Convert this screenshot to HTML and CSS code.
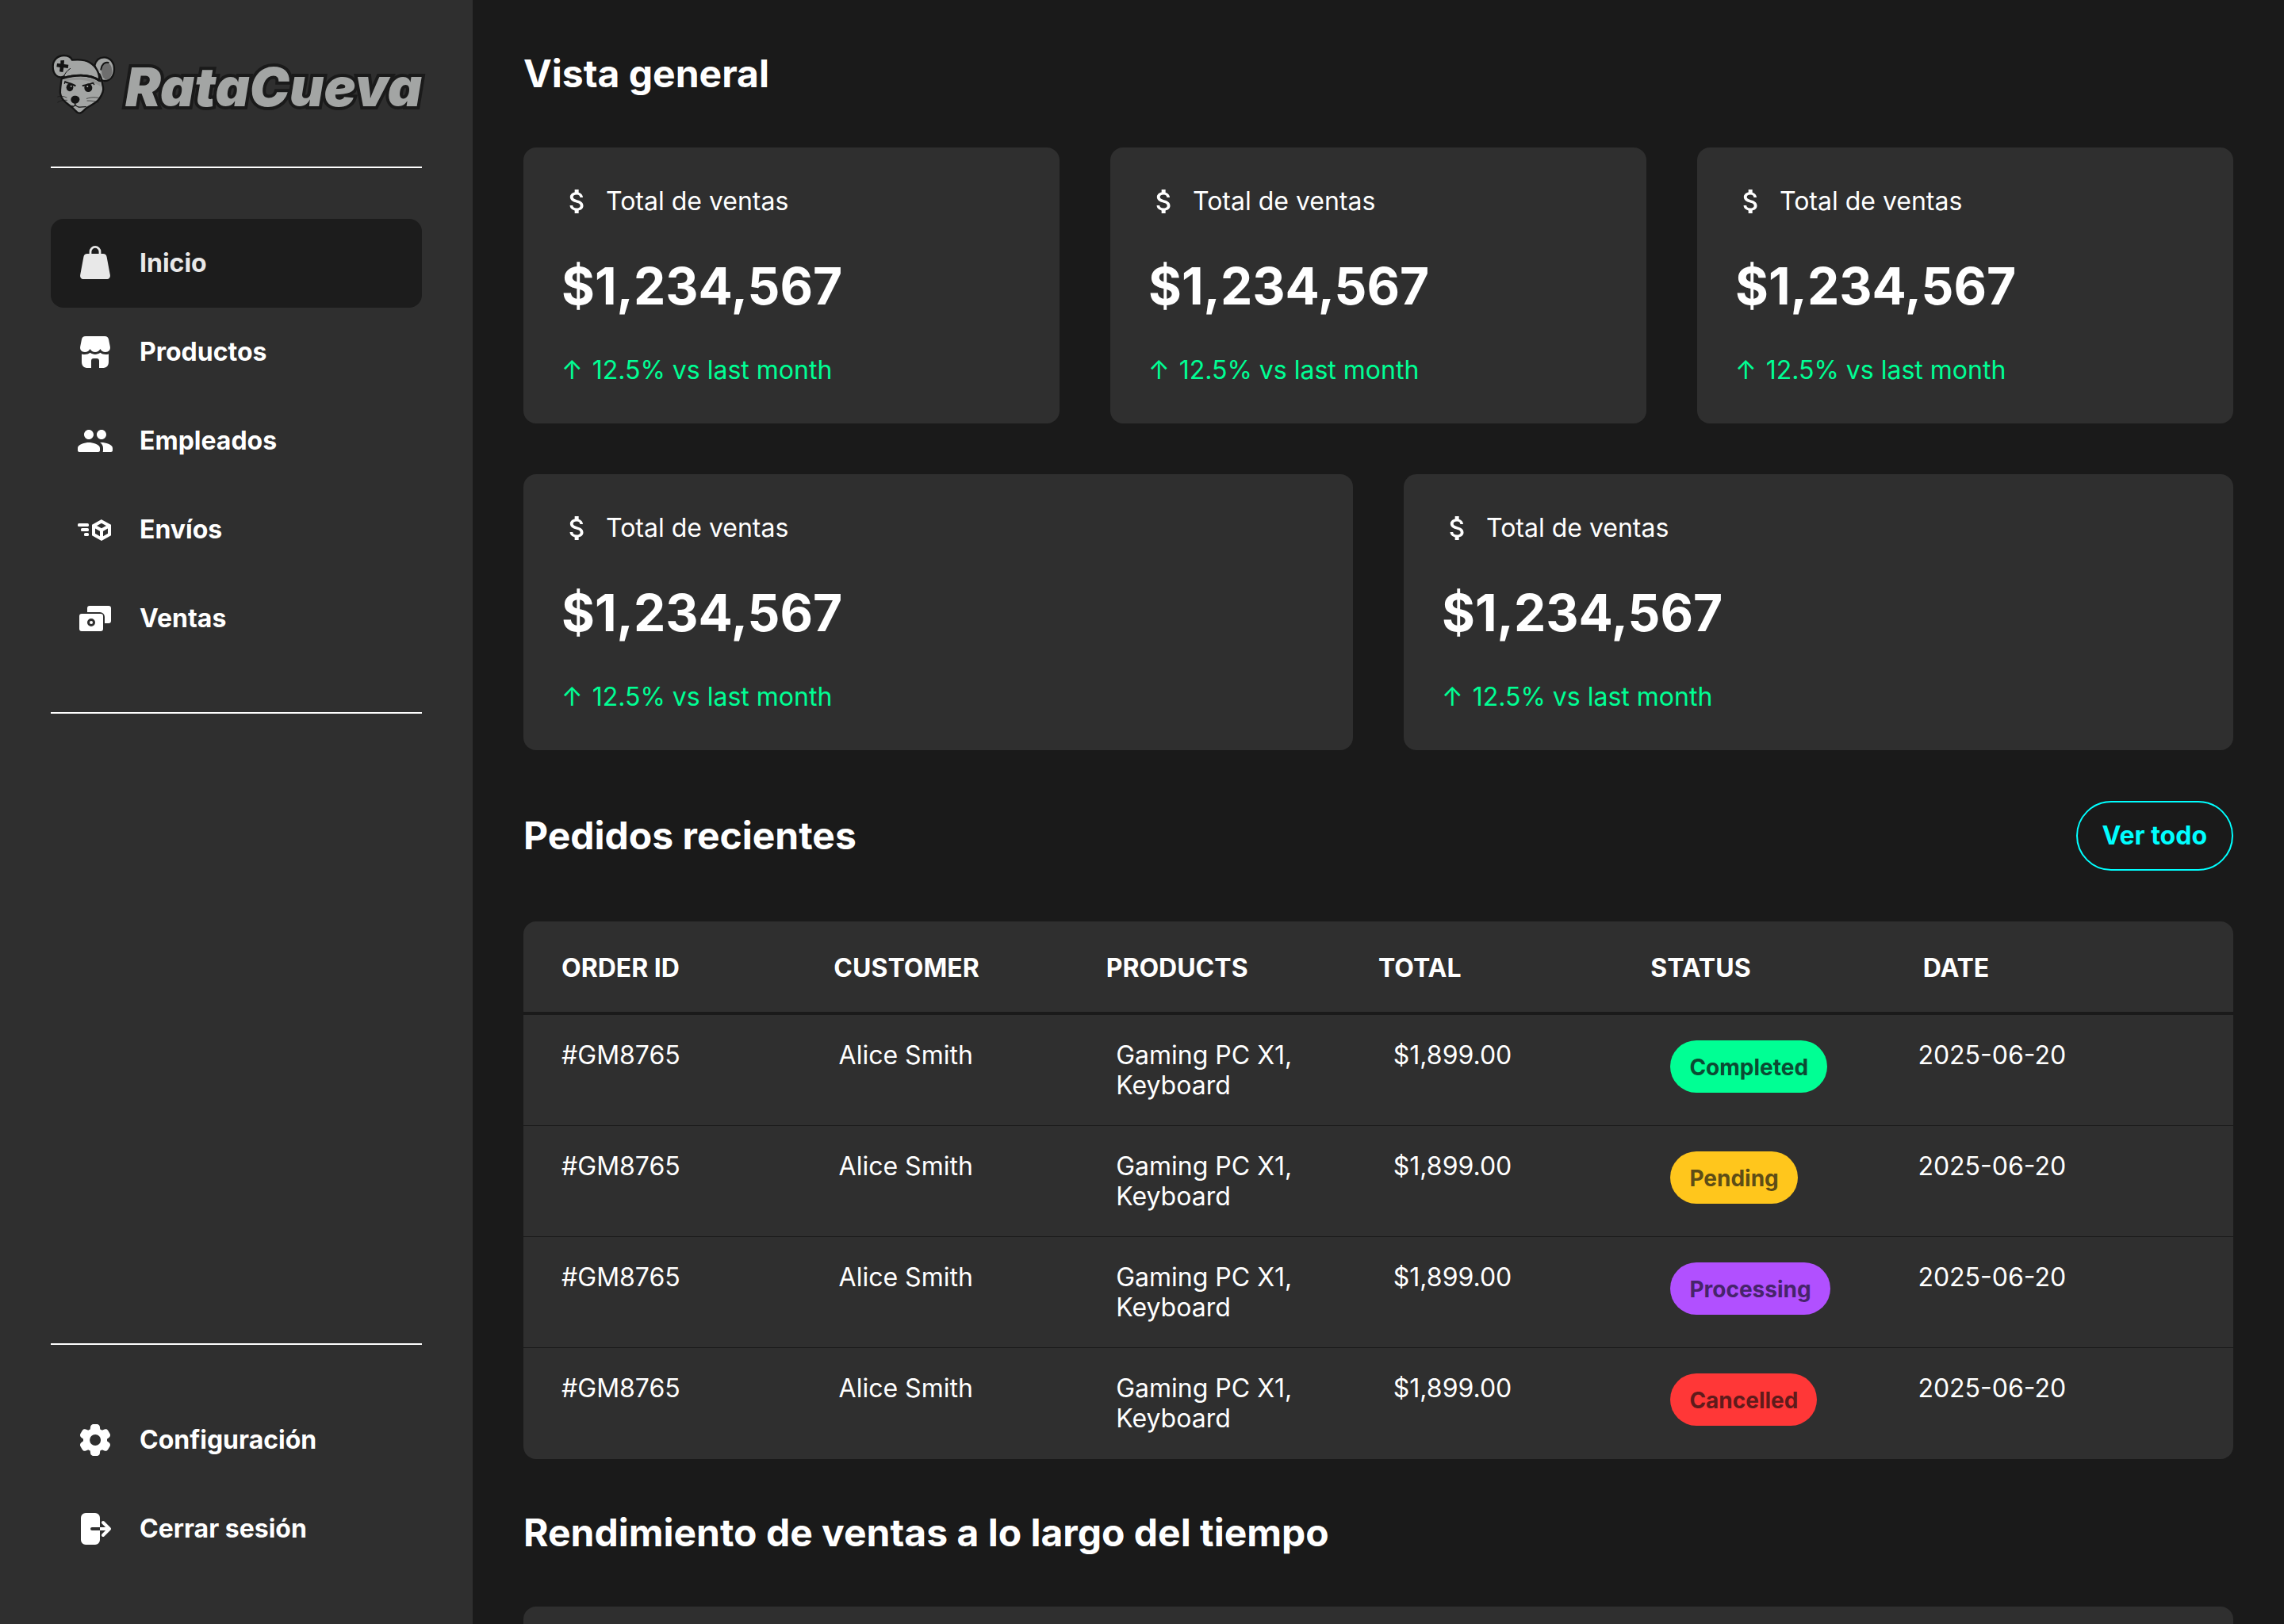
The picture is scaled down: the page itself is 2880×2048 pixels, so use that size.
FILE: index.html
```html
<!DOCTYPE html>
<html lang="es">
<head>
<meta charset="utf-8">
<meta name="viewport" content="width=device-width, initial-scale=1">
<title>RataCueva</title>
<link rel="stylesheet" href="styles.css">
</head>
<body>
<svg class="defs" aria-hidden="true">
  <symbol id="money" viewBox="0 0 24 24"><path d="M11.8 10.9c-2.27-.59-3-1.2-3-2.15 0-1.09 1.01-1.85 2.7-1.85 1.78 0 2.44.85 2.5 2.1h2.21c-.07-1.72-1.12-3.3-3.21-3.81V3h-3v2.16c-1.94.42-3.5 1.68-3.5 3.61 0 2.31 1.91 3.46 4.7 4.13 2.5.6 3 1.48 3 2.41 0 .69-.49 1.79-2.7 1.79-2.06 0-2.87-.92-2.98-2.1h-2.2c.12 2.19 1.76 3.42 3.68 3.83V21h3v-2.15c1.95-.37 3.5-1.5 3.5-3.55 0-2.84-2.43-3.81-4.7-4.4"/></symbol>
</svg>
<div class="layout">
  <aside class="sidebar">
    <a class="logo" href="#" aria-label="RataCueva">
      <svg class="logo-mark" viewBox="12 3 246 246" aria-hidden="true">
        <g stroke="#141414" stroke-width="7" stroke-linejoin="round" stroke-linecap="round">
          <path fill="#a3a5a4" d="M178 58C184 36 200 28 214 28c22 0 38 19 38 44 0 26-14 44-34 45-10 0-18-6-24-14z"/>
          <ellipse cx="224" cy="80" rx="20" ry="32" fill="#6e6e6e" stroke="none"/>
          <path fill="none" stroke-width="6" d="M202 74c2-18 14-30 28-26"/>
          <path fill="#a3a5a4" d="M56 98c-6 20-6 32-8 52-2 16 4 30 12 40 12 14 26 20 38 32 8 8 12 17 22 17s16-10 26-18c14-12 34-16 48-34 10-14 20-30 16-46-6-20-2-30-14-50z"/>
          <path fill="#a3a5a4" d="M62 100c-24 10-42-8-42-38 0-24 18-41 42-41 14 0 26 6 31 17 20-2 48-2 66 9 26 16 38 36 37 70-22-16-46-21-70-21-26 0-46 4-70 10"/>
          <path fill="none" stroke-width="8" d="M58 107c36-12 98-20 142 10"/>
          <path fill="none" stroke-width="3" d="M62 98c4-10 12-20 24-28"/>
        </g>
        <path fill="#777" d="M64 112c40-12 90-14 134 12l2 14c-36-28-96-30-138-18z" opacity=".4"/>
        <path fill="#141414" d="M49 40l14-1-1 15 17 2-2 13-16-2-3 17-13-2 2-16-13-2 2-13 13 1z"/>
        <g fill="#141414">
          <ellipse cx="84" cy="142" rx="13" ry="15"/>
          <ellipse cx="154" cy="143" rx="15" ry="16"/>
          <path d="M88 188c0-9 7-15 16-15s17 5 17 14-8 16-16 16-17-6-17-15z"/>
        </g>
        <g fill="none" stroke="#141414" stroke-linecap="round">
          <path stroke-width="6" d="M66 121c14 4 26 8 38 14M134 135c14-2 28-6 38-10"/>
          <path stroke-width="4" d="M66 121l-2 6M172 125l4 6M104 202v8M92 212c6 4 10 0 13-5 8 14 20 8 40 8"/>
          <path stroke-width="2" d="M72 180c-12-6-22-6-34-3M74 190c-14-2-26 2-36 8M148 184c18-6 34-6 52-1M150 192c18 0 30 2 42 6"/>
        </g>
        <circle cx="89" cy="137" r="3" fill="#b9bbba"/>
        <circle cx="151" cy="138" r="3" fill="#b9bbba"/>
      </svg>
      <span class="logo-text">RataCueva</span>
    </a>
    <hr class="divider">
    <nav class="nav nav-main" aria-label="Principal">
      <a class="nav-item active" href="#"><svg class="icon" viewBox="0 0 24 24"><path d="M7 6h10c1.300 0 2.100.7 2.300 2l2.100 11.200c.3 1.700-.6 2.800-2.200 2.800H4.800c-1.600 0-2.500-1.100-2.200-2.800L4.700 8C4.900 6.700 5.700 6 7 6z"/><path class="line thin" d="M9 6.500V4.700a3 3 0 0 1 6 0v1.800"/></svg>Inicio</a>
      <a class="nav-item" href="#"><svg class="icon" viewBox="0 0 24 24"><path d="M6 2h12c1.500 0 2.200.7 2.500 2l.9 4.500c.4 2-.8 3.500-2.900 3.500-1.500 0-2.600-.8-3.300-2-.7 1.200-1.800 2-3.200 2s-2.500-.8-3.200-2c-.7 1.200-1.800 2-3.300 2-2.100 0-3.300-1.500-2.900-3.500L3.500 4C3.800 2.700 4.500 2 6 2z"/><path d="M3.500 13.200c1.900.6 3.900.3 5.300-.8 1.900 1.400 4.500 1.400 6.400 0 1.400 1.100 3.400 1.400 5.300.8V18c0 2.700-1.300 4-4 4h-2v-4.500c0-.9-.6-1.500-1.500-1.500h-2c-.9 0-1.500.6-1.500 1.500V22h-2c-2.700 0-4-1.300-4-4z"/></svg>Productos</a>
      <a class="nav-item" href="#"><svg class="icon" viewBox="0 0 24 24"><path d="M16 11c1.660 0 3-1.340 3-3s-1.340-3-3-3-3 1.340-3 3 1.340 3 3 3m-8 0c1.660 0 3-1.340 3-3S9.660 5 8 5 5 6.340 5 8s1.340 3 3 3m0 2c-2.330 0-7 1.170-7 3.500V18c0 .55.45 1 1 1h12c.55 0 1-.45 1-1v-1.500c0-2.330-4.670-3.500-7-3.500m8 0c-.29 0-.62.02-.97.05 1.160.84 1.970 1.970 1.970 3.450V18c0 .35-.07.690-.18 1H22c.55 0 1-.45 1-1v-1.500c0-2.330-4.670-3.500-7-3.500"/></svg>Empleados</a>
      <a class="nav-item" href="#"><svg class="icon" viewBox="0 0 24 24"><rect x="1" y="8" width="7" height="2" rx=".8"/><rect x="3" y="11" width="5" height="2" rx=".8"/><rect x="5" y="14" width="3" height="2" rx=".8"/><path class="line" d="M16 6.700l5 2.800v5.500l-5 2.900-5-2.900V9.500zM11 9.500l5 2.800 5-2.800M16 12.300V18"/></svg>Envíos</a>
      <a class="nav-item" href="#"><svg class="icon" viewBox="0 0 24 24"><path d="M8.500 4h12A1.500 1.500 0 0 1 22 5.500v8a1.500 1.500 0 0 1-1.500 1.500H18v-4a3 3 0 0 0-3-3H7V5.500A1.500 1.500 0 0 1 8.500 4z"/><path fill-rule="evenodd" d="M3.500 9h12a1.500 1.500 0 0 1 1.500 1.500v8a1.500 1.500 0 0 1-1.500 1.500h-12A1.500 1.500 0 0 1 2 18.500v-8A1.500 1.500 0 0 1 3.500 9zm6 3a2.500 2.500 0 1 0 0 5 2.500 2.500 0 0 0 0-5z"/><circle cx="9.500" cy="14.500" r="1"/></svg>Ventas</a>
    </nav>
    <hr class="divider">
    <nav class="nav nav-bottom" aria-label="Cuenta">
      <hr class="divider">
      <a class="nav-item" href="#"><svg class="icon" viewBox="0 0 24 24"><path fill-rule="evenodd" d="M10.825 22q-.675 0-1.162-.45t-.588-1.100L8.850 18.800q-.325-.125-.612-.3t-.563-.375l-1.550.65q-.625.275-1.250.05t-.975-.8l-1.175-2.050q-.35-.575-.2-1.225t.675-1.075l1.325-1Q4.500 12.500 4.500 12.337v-.675q0-.162.025-.337l-1.325-1Q2.675 9.900 2.525 9.250t.2-1.225L3.900 5.975q.35-.575.975-.8t1.250.05l1.550.65q.275-.2.575-.375t.6-.3l.225-1.650q.1-.65.588-1.100T10.825 2h2.350q.675 0 1.163.45t.587 1.100l.225 1.650q.325.125.613.3t.562.375l1.550-.65q.625-.275 1.250-.05t.975.8l1.175 2.050q.35.575.2 1.225t-.675 1.075l-1.325 1q.025.175.025.338v.674q0 .163-.05.338l1.325 1q.525.425.675 1.075t-.2 1.225l-1.200 2.050q-.35.575-.975.8t-1.250-.05l-1.500-.65q-.275.2-.575.375t-.6.3l-.225 1.650q-.1.650-.587 1.100t-1.163.45zM12.050 15.500q1.450 0 2.475-1.025T15.550 12t-1.025-2.475T12.050 8.500q-1.475 0-2.488 1.025T8.550 12t1.013 2.475T12.050 15.500"/></svg>Configuración</a>
      <a class="nav-item" href="#"><svg class="icon" viewBox="0 0 24 24"><path d="M6 2h6a3 3 0 0 1 3 3v6h-5a1 1 0 0 0 0 2h5v6a3 3 0 0 1-3 3H6a3 3 0 0 1-3-3V5a3 3 0 0 1 3-3z"/><path d="M15 11h4.500v2H15z"/><path class="line round" d="M17 8l4 4-4 4"/></svg>Cerrar sesión</a>
    </nav>
  </aside>

  <main class="main">
    <h1 class="title">Vista general</h1>
    <section class="cards three">
      <article class="card"><h2 class="card-label"><svg class="icon small"><use href="#money"/></svg>Total de ventas</h2><p class="amount">$1,234,567</p><p class="trend"><span>↑</span>12.5% vs last month</p></article>
      <article class="card"><h2 class="card-label"><svg class="icon small"><use href="#money"/></svg>Total de ventas</h2><p class="amount">$1,234,567</p><p class="trend"><span>↑</span>12.5% vs last month</p></article>
      <article class="card"><h2 class="card-label"><svg class="icon small"><use href="#money"/></svg>Total de ventas</h2><p class="amount">$1,234,567</p><p class="trend"><span>↑</span>12.5% vs last month</p></article>
    </section>
    <section class="cards two">
      <article class="card"><h2 class="card-label"><svg class="icon small"><use href="#money"/></svg>Total de ventas</h2><p class="amount">$1,234,567</p><p class="trend"><span>↑</span>12.5% vs last month</p></article>
      <article class="card"><h2 class="card-label"><svg class="icon small"><use href="#money"/></svg>Total de ventas</h2><p class="amount">$1,234,567</p><p class="trend"><span>↑</span>12.5% vs last month</p></article>
    </section>
    <header class="section-head">
      <h2 class="title">Pedidos recientes</h2>
      <button class="outline-button" type="button">Ver todo</button>
    </header>
    <table class="orders">
      <thead>
        <tr><th scope="col">ORDER ID</th><th scope="col">CUSTOMER</th><th scope="col">PRODUCTS</th><th scope="col">TOTAL</th><th scope="col">STATUS</th><th scope="col">DATE</th></tr>
      </thead>
      <tbody>
        <tr><td>#GM8765</td><td>Alice Smith</td><td>Gaming PC X1, Keyboard</td><td>$1,899.00</td><td><span class="badge completed">Completed</span></td><td>2025-06-20</td></tr>
        <tr><td>#GM8765</td><td>Alice Smith</td><td>Gaming PC X1, Keyboard</td><td>$1,899.00</td><td><span class="badge pending">Pending</span></td><td>2025-06-20</td></tr>
        <tr><td>#GM8765</td><td>Alice Smith</td><td>Gaming PC X1, Keyboard</td><td>$1,899.00</td><td><span class="badge processing">Processing</span></td><td>2025-06-20</td></tr>
        <tr><td>#GM8765</td><td>Alice Smith</td><td>Gaming PC X1, Keyboard</td><td>$1,899.00</td><td><span class="badge cancelled">Cancelled</span></td><td>2025-06-20</td></tr>
      </tbody>
    </table>
    <h2 class="title">Rendimiento de ventas a lo largo del tiempo</h2>
    <section class="card chart"></section>
  </main>
</div>
</body>
</html>
```
FILE: styles.css
```css
:root {
  --bg: #1a1a1a;
  --panel: #2f2f2f;
  --white: #ffffff;
  --green: #00ff94;
  --cyan: #00ffff;
}

* {
  box-sizing: border-box;
  margin: 0;
  padding: 0;
}

body {
  background: var(--bg);
  color: var(--white);
  font-family: Inter, "Liberation Sans", sans-serif;
  font-size: 32px;
  font-weight: 400;
  line-height: 38px;
}

.defs {
  display: none;
}

.layout {
  display: flex;
  height: 100vh;
  overflow: hidden;
}

.sidebar {
  display: flex;
  flex: 0 0 596px;
  flex-direction: column;
  gap: 64px;
  min-width: 0;
  padding: 64px;
  background: var(--panel);
}

.logo {
  display: flex;
  align-items: center;
  gap: 12px;
  height: 82px;
  color: #a3a5a4;
  text-decoration: none;
}

.logo-mark {
  flex: none;
  width: 82px;
  height: 82px;
}

.logo-text {
  padding-top: 10px;
  font-size: 67px;
  font-style: italic;
  font-weight: 900;
  line-height: 82px;
  -webkit-text-stroke: 8px #1a1a1a;
  paint-order: stroke fill;
}

.divider {
  flex: none;
  height: 2px;
  border: 0;
  background: var(--white);
}

.nav {
  display: flex;
  flex-direction: column;
}

.nav-main {
  margin-bottom: -2px;
}

.nav-bottom {
  margin-top: auto;
}

.nav-bottom .divider {
  margin-bottom: 64px;
}

.nav-item {
  display: flex;
  align-items: center;
  gap: 32px;
  height: 112px;
  padding: 0 32px;
  border-radius: 16px;
  color: var(--white);
  font-weight: 700;
  text-decoration: none;
}

.nav-item.active {
  background: #1c1c1c;
  color: #e8e8e8;
}

.icon {
  flex: none;
  width: 48px;
  height: 48px;
  fill: currentColor;
}

.icon.small {
  width: 40px;
  height: 40px;
}

.icon .line {
  fill: none;
  stroke: currentColor;
  stroke-width: 2;
}

.icon .thin {
  stroke-width: 1.4;
}

.icon .round {
  stroke-linecap: round;
  stroke-linejoin: round;
}

.main {
  display: flex;
  flex: 1;
  flex-direction: column;
  gap: 64px;
  min-width: 0;
  padding: 64px;
  overflow: hidden;
}

.main > * {
  flex: none;
}

.title {
  font-size: 48px;
  font-weight: 700;
  line-height: 58px;
}

.cards {
  display: grid;
  gap: 64px;
}

.three {
  grid-template-columns: repeat(3, 1fr);
}

.two {
  grid-template-columns: repeat(2, 1fr);
}

.card {
  display: flex;
  flex-direction: column;
  gap: 48px;
  padding: 48px;
  border-radius: 16px;
  background: var(--panel);
}

.card-label {
  display: flex;
  align-items: center;
  gap: 16px;
  font-size: 32px;
  font-weight: 400;
  line-height: 38px;
}

.amount {
  font-size: 64px;
  font-weight: 700;
  line-height: 78px;
}

.trend {
  display: flex;
  gap: 12px;
  color: var(--green);
}

.chart {
  min-height: 640px;
}

.section-head {
  display: flex;
  align-items: center;
  justify-content: space-between;
}

.outline-button {
  padding: 22px 31px;
  border: 2px solid var(--cyan);
  border-radius: 44px;
  background: transparent;
  color: var(--cyan);
  font: 700 32px/40px Inter, "Liberation Sans", sans-serif;
}

.orders {
  display: block;
  overflow: hidden;
  border-radius: 16px;
  background: var(--panel);
}

.orders thead,
.orders tbody {
  display: block;
}

.orders tr {
  display: grid;
  padding: 0 48px;
}

.orders thead tr {
  grid-template-columns: repeat(6, 1fr);
  padding-top: 40px;
  padding-bottom: 36px;
  border-bottom: 4px solid var(--bg);
}

.orders tbody tr {
  grid-template-columns: repeat(4, 1fr) 312px 1fr;
  align-items: start;
  height: 140px;
  padding-top: 32px;
  border-bottom: 1px solid var(--bg);
}

.orders tbody tr:last-child {
  border-bottom: 0;
}

.orders th {
  font-weight: 700;
  text-align: left;
}

.badge {
  display: block;
  width: fit-content;
  padding: 16px 24px 14px;
  border-radius: 33px;
  font-size: 28px;
  font-weight: 700;
  line-height: 36px;
}

.completed {
  background: #00ff94;
  color: #0b4b33;
}

.pending {
  background: #ffc61c;
  color: #5e4d16;
}

.processing {
  background: #b150ff;
  color: #47246b;
}

.cancelled {
  background: #ff3737;
  color: #5f1b1b;
}
```
